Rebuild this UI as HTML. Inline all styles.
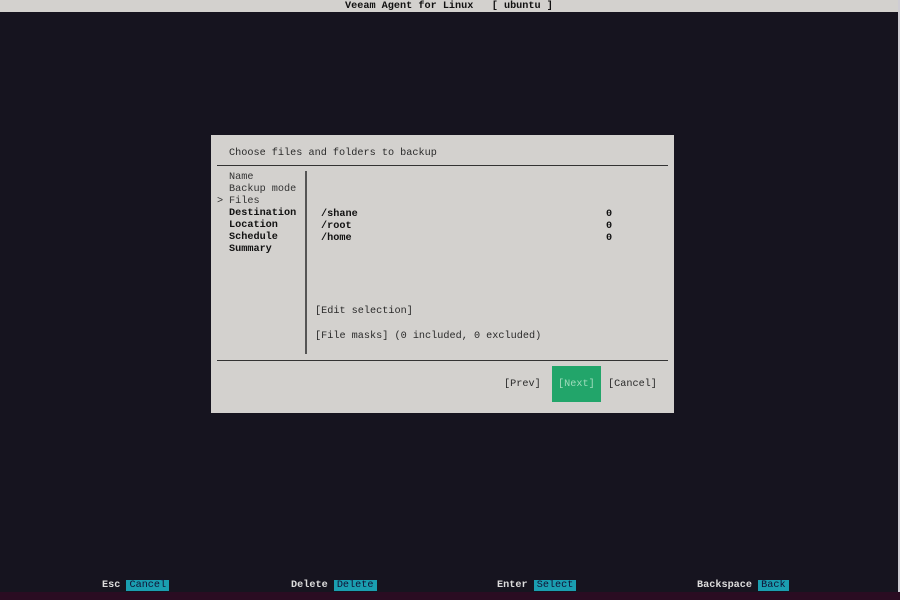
<!DOCTYPE html>
<html><head><meta charset="utf-8"><style>
*{margin:0;padding:0;box-sizing:border-box}
body{width:900px;height:600px;background:#16141f;position:relative;overflow:hidden;font-family:"Liberation Mono","DejaVu Sans Mono",monospace;font-size:10.2px;color:#2a2a2a}
.t{position:absolute;white-space:pre;line-height:12px}
.b{font-weight:bold;color:#111}
.top{position:absolute;left:0;top:0;width:900px;height:12px;background:#d3d1ce}
.redge{position:absolute;right:0;top:0;width:2px;height:600px;background:#cfcdd4}
.bot{position:absolute;left:0;top:592px;width:900px;height:8px;background:#2a0c22}
.dlg{position:absolute;left:211px;top:135px;width:463px;height:278px;background:#d3d1ce}
.hl{position:absolute;height:1px;background:#333}
.vl{position:absolute;width:2px;background:#555}
.next{position:absolute;left:552px;top:366px;width:49px;height:36px;background:#22a56a}
.k{color:#ddd;font-weight:bold}
.lab{background:#1a9eb0;color:#113;padding:0 3px}
</style></head><body>
<div class="top"></div>
<div class="t b" style="left:345px;top:1px;color:#111">Veeam Agent for Linux   [ ubuntu ]</div>
<div class="redge"></div>
<div class="dlg"></div>
<div class="t" style="left:229px;top:148px">Choose files and folders to backup</div>
<div class="hl" style="left:217px;top:165px;width:451px"></div>
<div class="vl" style="left:305px;top:171px;height:183px"></div>
<div class="hl" style="left:217px;top:360px;width:451px"></div>
<div class="t" style="left:229px;top:172px;color:#333">Name
Backup mode
Files</div>
<div class="t" style="left:217px;top:196px">&gt;</div>
<div class="t b" style="left:229px;top:208px">Destination
Location
Schedule
Summary</div>
<div class="t b" style="left:321px;top:209px">/shane
/root
/home</div>
<div class="t b" style="left:606px;top:209px">0
0
0</div>
<div class="t" style="left:315px;top:306px">[Edit selection]</div>
<div class="t" style="left:315px;top:331px">[File masks] (0 included, 0 excluded)</div>
<div class="t" style="left:504px;top:379px">[Prev]</div>
<div class="next"></div>
<div class="t" style="left:558px;top:379px;color:#9fdcbc">[Next]</div>
<div class="t" style="left:608px;top:379px">[Cancel]</div>
<div class="bot"></div>
<div class="t" style="left:102px;top:580px"><span class="k">Esc</span> <span class="lab">Cancel</span></div>
<div class="t" style="left:291px;top:580px"><span class="k">Delete</span> <span class="lab">Delete</span></div>
<div class="t" style="left:497px;top:580px"><span class="k">Enter</span> <span class="lab">Select</span></div>
<div class="t" style="left:697px;top:580px"><span class="k">Backspace</span> <span class="lab">Back</span></div>
</body></html>
